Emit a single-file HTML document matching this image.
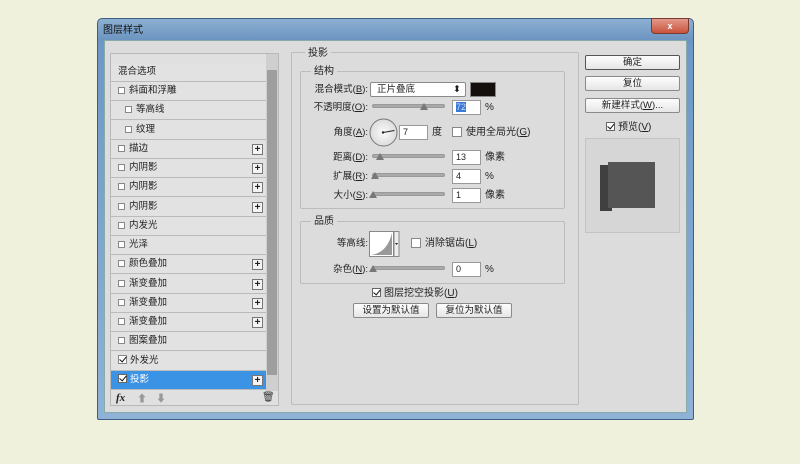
<!DOCTYPE html>
<html><head><meta charset="utf-8"><style>
*{margin:0;padding:0;box-sizing:border-box}
body{width:800px;height:464px;background:#eff1dc;font-family:"Liberation Sans","Noto Sans CJK SC",sans-serif;font-size:10px;line-height:15px;color:#222;position:relative;overflow:hidden}
.a{position:absolute}
.win{left:97px;top:18px;width:597px;height:402px;background:linear-gradient(#8db0d2,#6a93c0 22px,#6d98c6 22px,#8fb2d6);border:1px solid #3c5f86;border-radius:5px 5px 2px 2px}
.body{left:104px;top:40px;width:583px;height:373px;background:#dcdcdc;border:1px solid #8aa;}
.title{left:103px;top:23px;font-size:10px;color:#111}
.close{left:651px;top:18px;width:38px;height:16px;background:linear-gradient(#e39a8a,#c9533c);border:1px solid #7a3a30;border-radius:0 0 4px 4px;color:#fff;font-size:9px;text-align:center;line-height:14px;font-weight:bold}
.lp{left:110px;top:53px;width:169px;height:353px;background:#e0e0e0;border:1px solid #b8b8b8}
.row{position:absolute;left:111px;width:155px;height:19px;border-bottom:1px solid #bbb;background:#e2e2e2;padding-left:7px;line-height:18px;font-size:9.5px}
.cb{display:inline-block;width:7px;height:7px;border:1px solid #888;background:#fff;margin-right:4px;vertical-align:-1px}
.plus{position:absolute;right:3px;top:4px;width:11px;height:11px;border:1px solid #777;background:#f4f4f4;font-size:10px;line-height:9px;text-align:center;font-weight:bold}
.sb{left:266px;top:54px;width:12px;height:337px;background:#cfcfcf}
.thumb{left:267px;top:70px;width:10px;height:305px;background:#9e9e9e}
.grp{border:1px solid #bcbcbc;border-radius:2px}
.lbl{position:absolute;font-size:9.5px;text-align:right;line-height:15px}
.in{position:absolute;background:#fff;border:1px solid #999;height:15px;font-size:9px;line-height:13px;padding-left:3px}
.sl{position:absolute;height:4px;background:#aaa;border:1px solid #999;border-radius:2px}
.hd{position:absolute;width:0;height:0;border-left:4px solid transparent;border-right:4px solid transparent;border-bottom:7px solid #777}
.btn{position:absolute;background:linear-gradient(#fdfdfd,#e6e6e6);border:1px solid #8a8a8a;border-radius:2px;text-align:center;font-size:9.5px;line-height:13px}
.chk{display:inline-block;width:9px;height:9px;border:1px solid #666;background:#fff;margin-right:3px;vertical-align:-1px;position:relative}
.chk::after{content:"";position:absolute;left:2px;top:-1px;width:3px;height:6px;border:solid #111;border-width:0 1.5px 1.5px 0;transform:rotate(40deg)}
</style></head><body>
<div class="a win"></div>
<div class="a title">图层样式</div>
<div class="a close">x</div>
<div class="a body"></div>
<div class="a lp"></div>
<div class="a sb"></div><div class="a thumb"></div>
<div class="row" style="top:63px">混合选项</div>
<div class="row" style="top:82px"><span class="cb"></span>斜面和浮雕</div>
<div class="row" style="top:101px;padding-left:14px"><span class="cb"></span>等高线</div>
<div class="row" style="top:121px;padding-left:14px"><span class="cb"></span>纹理</div>
<div class="row" style="top:140px"><span class="cb"></span>描边<span class="plus">+</span></div>
<div class="row" style="top:159px"><span class="cb"></span>内阴影<span class="plus">+</span></div>
<div class="row" style="top:178px"><span class="cb"></span>内阴影<span class="plus">+</span></div>
<div class="row" style="top:198px"><span class="cb"></span>内阴影<span class="plus">+</span></div>
<div class="row" style="top:217px"><span class="cb"></span>内发光</div>
<div class="row" style="top:236px"><span class="cb"></span>光泽</div>
<div class="row" style="top:255px"><span class="cb"></span>颜色叠加<span class="plus">+</span></div>
<div class="row" style="top:275px"><span class="cb"></span>渐变叠加<span class="plus">+</span></div>
<div class="row" style="top:294px"><span class="cb"></span>渐变叠加<span class="plus">+</span></div>
<div class="row" style="top:313px"><span class="cb"></span>渐变叠加<span class="plus">+</span></div>
<div class="row" style="top:332px"><span class="cb"></span>图案叠加</div>
<div class="row" style="top:352px"><span class="chk" style="border-color:#888"></span>外发光</div>
<div class="row" style="top:371px;background:#3b93e6;color:#fff"><span class="chk"></span>投影<span class="plus" style="color:#222">+</span></div>
<div class="a" style="left:116px;top:391px;font-style:italic;font-weight:bold;font-family:'Liberation Serif',serif;font-size:11px">fx</div>
<div class="a" style="left:137px;top:392px;color:#999">⬆</div>
<div class="a" style="left:156px;top:392px;color:#999">⬇</div>
<div class="a" style="left:262px;top:390px;color:#333">🗑</div>

<div class="a grp" style="left:291px;top:52px;width:288px;height:353px"></div>
<div class="a" style="left:305px;top:46px;background:#dcdcdc;padding:0 3px">投影</div>
<div class="a grp" style="left:300px;top:71px;width:265px;height:138px"></div>
<div class="a" style="left:311px;top:64px;background:#dcdcdc;padding:0 3px">结构</div>
<div class="lbl" style="left:300px;top:82px;width:68px">混合模式(<u>B</u>):</div>
<div class="btn" style="left:370px;top:82px;width:96px;height:15px;text-align:left;padding-left:6px;background:#fff">正片叠底<span style="position:absolute;right:4px">⬍</span></div>
<div class="a" style="left:470px;top:82px;width:26px;height:15px;background:#150f0e;border:1px solid #888"></div>
<div class="lbl" style="left:300px;top:100px;width:68px">不透明度(<u>O</u>):</div>
<div class="sl" style="left:372px;top:104px;width:73px"></div><div class="hd" style="left:420px;top:103px"></div>
<div class="in" style="left:452px;top:100px;width:29px"><span style="background:#3a78d8;color:#cde">72</span></div>
<div class="a" style="left:485px;top:100px">%</div>
<div class="lbl" style="left:300px;top:125px;width:68px">角度(<u>A</u>):</div>
<svg class="a" style="left:369px;top:118px" width="30" height="30"><defs><radialGradient id="g"><stop offset="0" stop-color="#fbfbfb"/><stop offset="1" stop-color="#dcdcdc"/></radialGradient></defs><circle cx="14.5" cy="14.5" r="13.5" fill="url(#g)" stroke="#777"/><path d="M14 14.5 L25.5 12.5" stroke="#222" stroke-width="1"/><circle cx="14" cy="14.5" r="1.2" fill="#222"/></svg>
<div class="in" style="left:399px;top:125px;width:29px">7</div>
<div class="a" style="left:432px;top:125px">度</div>
<div class="a" style="left:452px;top:127px;width:10px;height:10px;border:1px solid #888;background:#fff"></div>
<div class="a" style="left:466px;top:125px">使用全局光(<u>G</u>)</div>
<div class="lbl" style="left:300px;top:150px;width:68px">距离(<u>D</u>):</div>
<div class="sl" style="left:372px;top:154px;width:73px"></div><div class="hd" style="left:376px;top:153px"></div>
<div class="in" style="left:452px;top:150px;width:29px">13</div>
<div class="a" style="left:485px;top:150px">像素</div>
<div class="lbl" style="left:300px;top:169px;width:68px">扩展(<u>R</u>):</div>
<div class="sl" style="left:372px;top:173px;width:73px"></div><div class="hd" style="left:371px;top:172px"></div>
<div class="in" style="left:452px;top:169px;width:29px">4</div>
<div class="a" style="left:485px;top:169px">%</div>
<div class="lbl" style="left:300px;top:188px;width:68px">大小(<u>S</u>):</div>
<div class="sl" style="left:372px;top:192px;width:73px"></div><div class="hd" style="left:369px;top:191px"></div>
<div class="in" style="left:452px;top:188px;width:29px">1</div>
<div class="a" style="left:485px;top:188px">像素</div>

<div class="a grp" style="left:300px;top:221px;width:265px;height:63px"></div>
<div class="a" style="left:311px;top:214px;background:#dcdcdc;padding:0 3px">品质</div>
<div class="lbl" style="left:300px;top:236px;width:68px">等高线:</div>
<svg class="a" style="left:369px;top:231px" width="31" height="26"><rect x=".5" y=".5" width="24" height="25" fill="#fff" stroke="#888"/><path d="M2 24 Q18 22 23 2 L23 24Z" fill="#999"/><rect x="25" y=".5" width="5" height="25" fill="#eee" stroke="#888"/><path d="M26 12h3l-1.5 2z" fill="#222"/></svg>
<div class="a" style="left:411px;top:238px;width:10px;height:10px;border:1px solid #888;background:#fff"></div>
<div class="a" style="left:425px;top:236px">消除锯齿(<u>L</u>)</div>
<div class="lbl" style="left:300px;top:262px;width:68px">杂色(<u>N</u>):</div>
<div class="sl" style="left:372px;top:266px;width:73px"></div><div class="hd" style="left:369px;top:265px"></div>
<div class="in" style="left:452px;top:262px;width:29px">0</div>
<div class="a" style="left:485px;top:262px">%</div>
<div class="a" style="left:372px;top:286px"><span class="chk"></span>图层挖空投影(<u>U</u>)</div>
<div class="btn" style="left:353px;top:303px;width:76px;height:15px">设置为默认值</div>
<div class="btn" style="left:436px;top:303px;width:76px;height:15px">复位为默认值</div>

<div class="btn" style="left:585px;top:55px;width:95px;height:15px;border-color:#555">确定</div>
<div class="btn" style="left:585px;top:76px;width:95px;height:15px">复位</div>
<div class="btn" style="left:585px;top:98px;width:95px;height:15px">新建样式(<u>W</u>)...</div>
<div class="a" style="left:606px;top:120px"><span class="chk"></span>预览(<u>V</u>)</div>
<div class="a" style="left:585px;top:138px;width:95px;height:95px;border:1px solid #c4c4c4;background:#d6d6d6"></div>
<div class="a" style="left:600px;top:165px;width:12px;height:46px;background:#404040"></div>
<div class="a" style="left:608px;top:162px;width:47px;height:46px;background:#555"></div>
</body></html>
